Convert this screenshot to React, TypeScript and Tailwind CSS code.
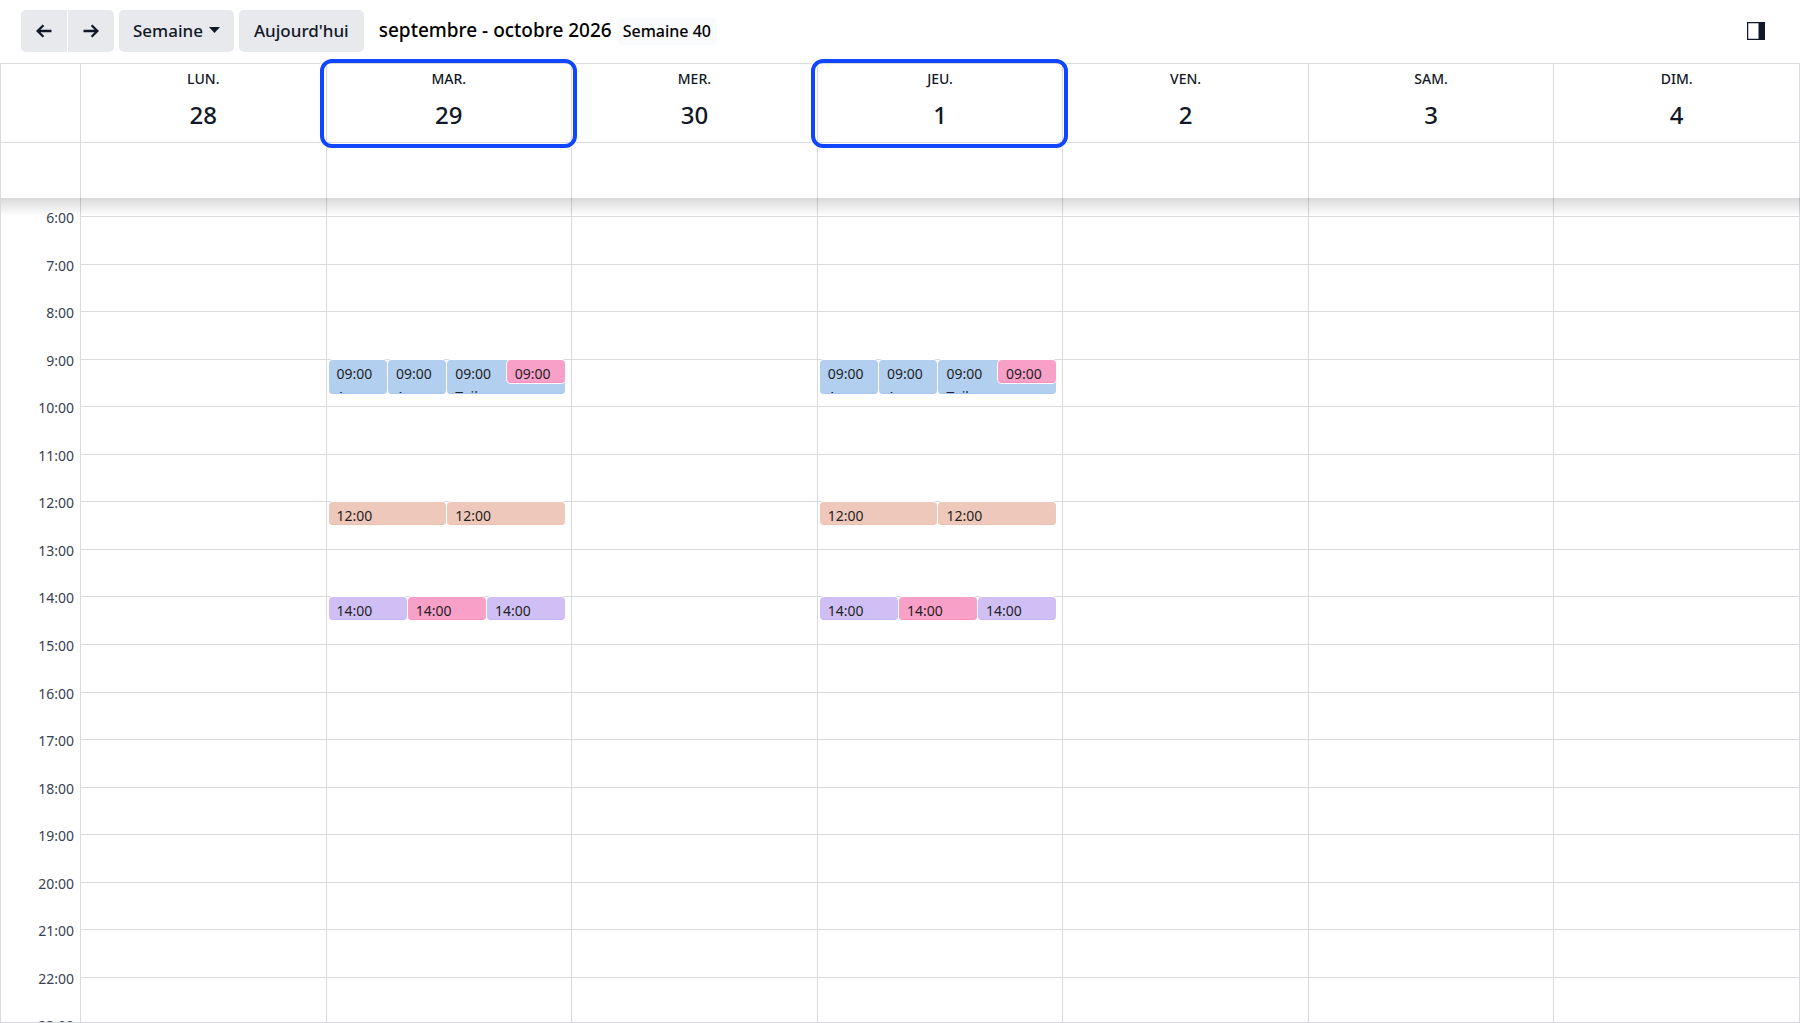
import React from "react";

type Tone = "blue" | "pink" | "peach" | "violet";
type CalEvent = { time: string; title?: string; tone: Tone; place: string };
type Slot = { cols: string; events: CalEvent[] };

const tones: Record<Tone, string> = {
  blue: "bg-[#b2cff0] border-b-[#a5c7ef]",
  pink: "bg-[#f8a0c8] border-b-[#f78ebe]",
  peach: "bg-[#eec8ba] border-b-[#ecc0af]",
  violet: "bg-[#d0bff4] border-b-[#c8b4f3]",
};

const slots: Record<number, Slot> = {
  9: {
    cols: "grid-cols-4",
    events: [
      { time: "09:00", title: "A", tone: "blue", place: "col-start-1 h-[34px]" },
      { time: "09:00", title: "A", tone: "blue", place: "col-start-2 h-[34px]" },
      { time: "09:00", title: "Toil", tone: "blue", place: "col-start-3 col-span-2 h-[34px]" },
      { time: "09:00", tone: "pink", place: "col-start-4 h-[23px]" },
    ],
  },
  12: {
    cols: "grid-cols-2",
    events: [
      { time: "12:00", tone: "peach", place: "col-start-1 h-[23px]" },
      { time: "12:00", tone: "peach", place: "col-start-2 h-[23px]" },
    ],
  },
  14: {
    cols: "grid-cols-3",
    events: [
      { time: "14:00", tone: "violet", place: "col-start-1 h-[23px]" },
      { time: "14:00", tone: "pink", place: "col-start-2 h-[23px]" },
      { time: "14:00", tone: "violet", place: "col-start-3 h-[23px]" },
    ],
  },
};

const days = [
  { name: "LUN.", num: 28 },
  { name: "MAR.", num: 29, busy: true },
  { name: "MER.", num: 30 },
  { name: "JEU.", num: 1, busy: true },
  { name: "VEN.", num: 2 },
  { name: "SAM.", num: 3 },
  { name: "DIM.", num: 4 },
];

const hours = Array.from({ length: 18 }, (_, i) => i + 6);

function Arrow({ flip = false }: { flip?: boolean }) {
  return (
    <svg
      viewBox="0 0 16 14"
      className={flip ? "h-[14px] w-4 rotate-180" : "h-[14px] w-4"}
      fill="none"
      stroke="currentColor"
      strokeWidth="2.3"
      aria-hidden="true"
    >
      <path d="M15.5 7H1.8M7.4 1.2L1.6 7l5.8 5.8" />
    </svg>
  );
}

function Toolbar() {
  const btn = "flex h-[42px] items-center justify-center bg-[#e7e9ed] font-medium";
  return (
    <header className="flex h-[63px] shrink-0 items-start gap-[5px] pt-[10px] pr-[35px] pl-[21px]">
      <div className="flex gap-px">
        <button aria-label="Précédent" className={`${btn} w-[46px] rounded-l-[5px]`}>
          <Arrow />
        </button>
        <button aria-label="Suivant" className={`${btn} w-[46px] rounded-r-[5px]`}>
          <Arrow flip />
        </button>
      </div>
      <button className={`${btn} gap-[6px] rounded-[5px] px-[14px] text-[17px]`}>
        Semaine
        <svg viewBox="0 0 11 6" className="mb-[2px] h-[6px] w-[11px]" fill="currentColor" aria-hidden="true">
          <path d="M0 0h11L5.5 6z" />
        </svg>
      </button>
      <button className={`${btn} rounded-[5px] px-[15px] text-[17px]`}>Aujourd'hui</button>
      <h1 className="flex h-[42px] items-center gap-[5px] pl-[10px] text-[19px] font-medium text-black">
        <span className="pb-[2px]">septembre - octobre 2026</span>
        <span className="rounded-[5px] bg-[#f9fafb] px-[6px] text-[16px] leading-[27px]">Semaine 40</span>
      </h1>
      <button aria-label="Panneau latéral" className="ml-auto flex h-[42px] items-center">
        <svg viewBox="0 0 18 18" className="h-[18px] w-[18px]" aria-hidden="true">
          <path d="M0.6 0.6h16.8v16.8H0.6z" fill="none" stroke="currentColor" strokeWidth="1.3" />
          <path d="M11.5 0H18v18h-6.5z" fill="currentColor" />
        </svg>
      </button>
    </header>
  );
}

function EventBlock({ event }: { event: CalEvent }) {
  return (
    <div
      className={`row-start-1 overflow-hidden rounded-[4px] border-b pt-1 pl-2 text-[14px] leading-[20px] text-[#1f1f1f] ring-1 ring-white ${tones[event.tone]} ${event.place}`}
    >
      <div>{event.time}</div>
      {event.title && <div className="pt-[3px]">{event.title}</div>}
    </div>
  );
}

const line = "border-[#d8dadd]";
const columns = "grid grid-cols-[80px_repeat(7,minmax(0,1fr))]";
const hourRows = "grid h-[856px] grid-rows-[repeat(18,minmax(0,1fr))]";

export default function App() {
  return (
    <div className="flex h-screen flex-col overflow-hidden bg-white font-['Noto_Sans','Open_Sans',sans-serif] text-[#111827]">
      <Toolbar />
      <main className={`flex min-h-0 flex-1 flex-col border-y border-l ${line}`}>
        <div className={`${columns} shrink-0 border-b ${line}`}>
          <div className={`border-r ${line}`} />
          {days.map((d) => (
            <div key={d.num} className={`relative flex h-[78px] flex-col items-center border-r pt-[5px] font-medium ${line}`}>
              <span className="text-[14px] leading-[20px]">{d.name}</span>
              <span className="mt-[9px] text-[24px] leading-[34px]">{d.num}</span>
              {d.busy && (
                <div className="absolute -top-[5px] -right-[6px] -bottom-[6px] -left-[7px] z-10 rounded-[12px] border-4 border-[#1046ff] ring-1 ring-white" />
              )}
            </div>
          ))}
        </div>
        <div className={`${columns} h-[55px] shrink-0`}>
          <div className={`border-r ${line}`} />
          {days.map((d) => (
            <div key={d.num} className={`border-r ${line}`} />
          ))}
        </div>
        <div className={`${columns} relative min-h-0 flex-1 overflow-hidden`}>
          <div className="pointer-events-none absolute inset-x-0 top-0 h-[18px] bg-linear-to-b from-black/15 to-transparent" />
          <div className={`border-r pt-[10px] ${line}`}>
            <div className={hourRows}>
              {hours.map((h) => (
                <div key={h} className="pr-[6px] text-right text-[14px] leading-[20px] text-[#374151]">
                  {h}:00
                </div>
              ))}
            </div>
          </div>
          {days.map((d) => (
            <div key={d.num} className={`border-r pt-[18px] ${line}`}>
              <div className={hourRows}>
                {hours.map((h) => (
                  <div key={h} className={`border-t ${line}`}>
                    {d.busy && slots[h] && (
                      <div className={`mr-[6px] ml-[2px] grid items-start gap-px ${slots[h].cols}`}>
                        {slots[h].events.map((e, i) => (
                          <EventBlock key={i} event={e} />
                        ))}
                      </div>
                    )}
                  </div>
                ))}
              </div>
            </div>
          ))}
        </div>
      </main>
    </div>
  );
}
